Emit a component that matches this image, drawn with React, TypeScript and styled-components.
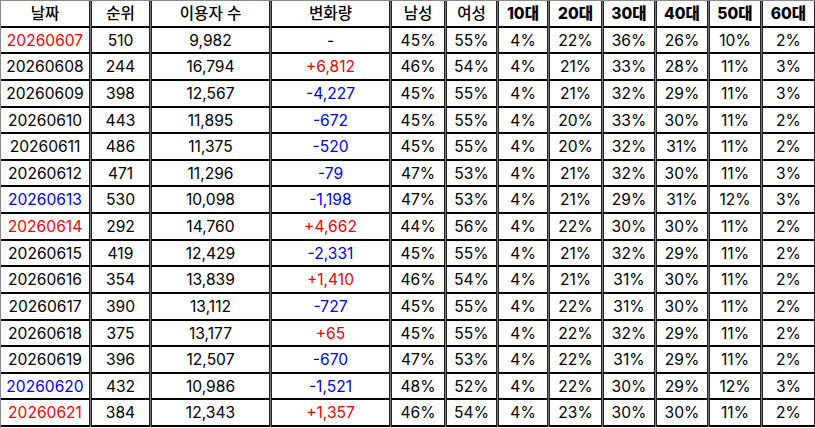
import React from "react";
import styled, { createGlobalStyle } from "styled-components";

const Global = createGlobalStyle`
  html, body { margin: 0; padding: 0; background: #fff; }
  body { font-family: Inter, "Noto Sans CJK KR", sans-serif; }
`;

const Grid = styled.div`
  width: 815px;
  height: 428px;
  box-sizing: border-box;
  display: grid;
  grid-template-columns: 89px 59px 119px 119px 54px 51px 50px 53px 52px 52px 52px 53px;
  grid-template-rows: repeat(16, 1fr);
  column-gap: 1px;
  background: #7a7a7a;
  border-top: 1px solid #8a8a8a;
  border-left: 1px solid #8a8a8a;
  padding-bottom: 1px;
  background-clip: content-box;
`;

const Cell = styled.div<{ $color?: string; $first?: boolean; $head?: boolean; $heavy?: boolean }>`
  box-sizing: border-box;
  background: #fff;
  display: flex;
  align-items: center;
  justify-content: center;
  border-bottom: 2px solid #000;
  border-right: 1px solid #222;
  border-left: ${(p) => (p.$first ? "none" : "1px solid #222")};
  color: ${(p) => p.$color ?? "#000"};
  font-size: 15.6px;
  font-weight: ${(p) => (p.$heavy ? 800 : p.$head ? 500 : 400)};
  white-space: nowrap;
  line-height: 1;
  padding-top: 1px;
`;

const headers = ["날짜", "순위", "이용자 수", "변화량", "남성", "여성", "10대", "20대", "30대", "40대", "50대", "60대"];

type Row = [string, string, string, string, string, number[]];
const R = "#ff0000";
const B = "#0000ff";
const K = "#000";

const rows: Row[] = [
  ["20260607", R, "510", "9,982", "-", [45, 55, 4, 22, 36, 26, 10, 2]],
  ["20260608", K, "244", "16,794", "+6,812", [46, 54, 4, 21, 33, 28, 11, 3]],
  ["20260609", K, "398", "12,567", "-4,227", [45, 55, 4, 21, 32, 29, 11, 3]],
  ["20260610", K, "443", "11,895", "-672", [45, 55, 4, 20, 33, 30, 11, 2]],
  ["20260611", K, "486", "11,375", "-520", [45, 55, 4, 20, 32, 31, 11, 2]],
  ["20260612", K, "471", "11,296", "-79", [47, 53, 4, 21, 32, 30, 11, 3]],
  ["20260613", B, "530", "10,098", "-1,198", [47, 53, 4, 21, 29, 31, 12, 3]],
  ["20260614", R, "292", "14,760", "+4,662", [44, 56, 4, 22, 30, 30, 11, 2]],
  ["20260615", K, "419", "12,429", "-2,331", [45, 55, 4, 21, 32, 29, 11, 2]],
  ["20260616", K, "354", "13,839", "+1,410", [46, 54, 4, 21, 31, 30, 11, 2]],
  ["20260617", K, "390", "13,112", "-727", [45, 55, 4, 22, 31, 30, 11, 2]],
  ["20260618", K, "375", "13,177", "+65", [45, 55, 4, 22, 32, 29, 11, 2]],
  ["20260619", K, "396", "12,507", "-670", [47, 53, 4, 22, 31, 29, 11, 2]],
  ["20260620", B, "432", "10,986", "-1,521", [48, 52, 4, 22, 30, 29, 12, 3]],
  ["20260621", R, "384", "12,343", "+1,357", [46, 54, 4, 23, 30, 30, 11, 2]],
];

function changeColor(v: string) {
  if (v.startsWith("+")) return R;
  if (v.startsWith("-") && v.length > 1) return B;
  return K;
}

export default function App() {
  return (
    <>
      <Global />
      <Grid>
        {headers.map((h, i) => (
          <Cell key={h} $first={i === 0} $head $heavy={/\d/.test(h)}>
            {h}
          </Cell>
        ))}
        {rows.map(([date, dc, rank, users, change, pcts]) => (
          <React.Fragment key={date}>
            <Cell $first $color={dc}>{date}</Cell>
            <Cell>{rank}</Cell>
            <Cell>{users}</Cell>
            <Cell $color={changeColor(change)}>{change}</Cell>
            {pcts.map((p, j) => (
              <Cell key={j}>{p}%</Cell>
            ))}
          </React.Fragment>
        ))}
      </Grid>
    </>
  );
}
